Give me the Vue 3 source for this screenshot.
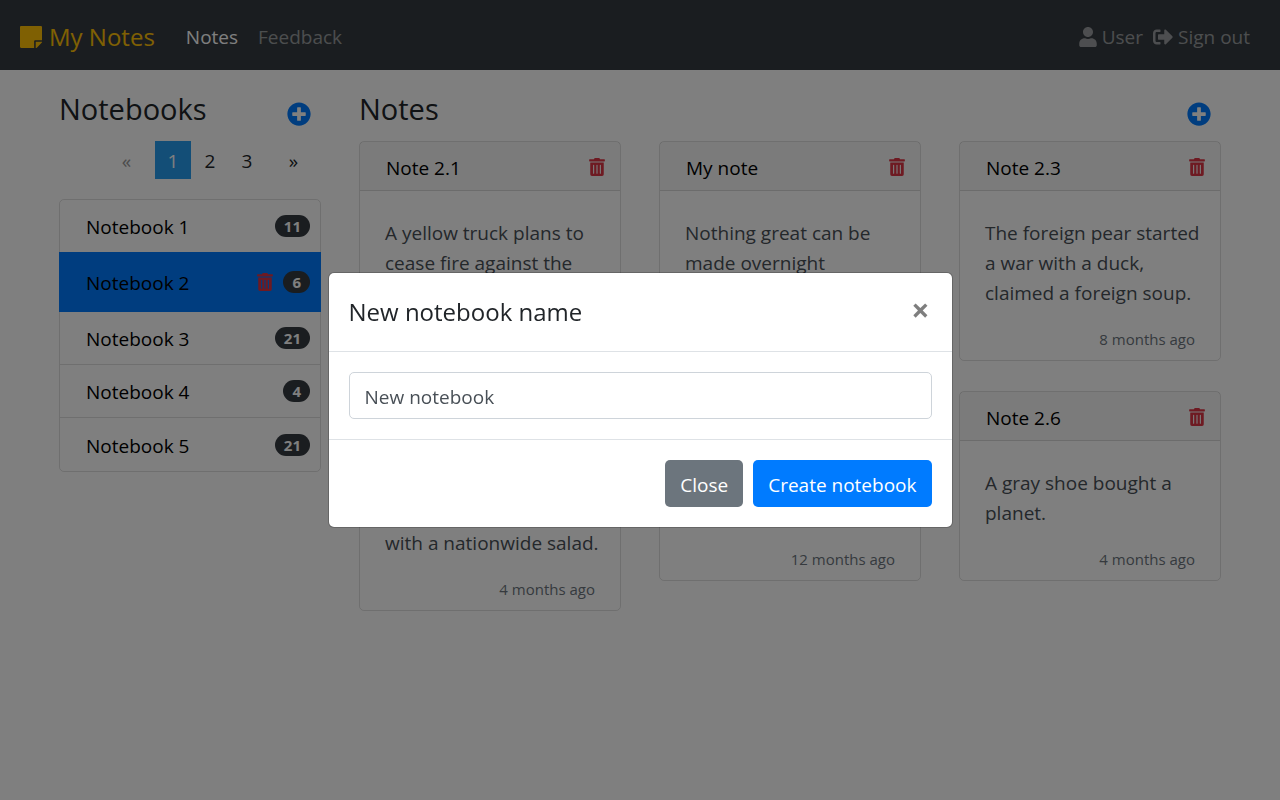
<script setup>
import { ref } from 'vue'

const name = ref('')
const notebooks = [
  { id: 1, title: 'Notebook 1', count: 11 },
  { id: 2, title: 'Notebook 2', count: 6, active: true },
  { id: 3, title: 'Notebook 3', count: 21 },
  { id: 4, title: 'Notebook 4', count: 4 },
  { id: 5, title: 'Notebook 5', count: 21 },
]
const notes = [
  { title: 'Note 2.1', lines: ['A yellow truck plans to', 'cease fire against the'], age: '4 months ago', tall: true },
  { title: 'My note', lines: ['Nothing great can be', 'made overnight'], age: '2 months ago', tall: true },
  { title: 'Note 2.3', lines: ['The foreign pear started', 'a war with a duck,', 'claimed a foreign soup.'], age: '8 months ago' },
  { title: 'Note 2.4', lines: ['The truck went away', 'and came back', 'with a nationwide salad.'], age: '4 months ago' },
  { title: 'Note 2.5', lines: [], age: '12 months ago' },
  { title: 'Note 2.6', lines: ['A gray shoe bought a', 'planet.'], age: '4 months ago' },
]
const trash = 'M32 464a48 48 0 0 0 48 48h288a48 48 0 0 0 48-48V128H32zm272-256a16 16 0 0 1 32 0v224a16 16 0 0 1-32 0zm-96 0a16 16 0 0 1 32 0v224a16 16 0 0 1-32 0zm-96 0a16 16 0 0 1 32 0v224a16 16 0 0 1-32 0zM432 32H312l-9.4-18.700A24 24 0 0 0 281.100 0H166.800a23.700 23.700 0 0 0-21.400 13.300L136 32H16A16 16 0 0 0 0 48v32a16 16 0 0 0 16 16h416a16 16 0 0 0 16-16V48a16 16 0 0 0-16-16z'
const plus = 'M256 8C119 8 8 119 8 256s111 248 248 248 248-111 248-248S393 8 256 8zm144 276c0 6.600-5.400 12-12 12h-92v92c0 6.600-5.400 12-12 12h-56c-6.600 0-12-5.400-12-12v-92h-92c-6.600 0-12-5.400-12-12v-56c0-6.600 5.400-12 12-12h92v-92c0-6.600 5.400-12 12-12h56c6.600 0 12 5.400 12 12v92h92c6.600 0 12 5.400 12 12v56z'
</script>

<template>
  <div class="page">
    <header class="navbar">
      <a class="brand" href="#">
        <svg class="icon-note" viewBox="0 32 448 448"><path d="M312 320h136V56c0-13.300-10.700-24-24-24H24C10.700 32 0 42.700 0 56v400c0 13.300 10.700 24 24 24h264V344c0-13.200 10.800-24 24-24zm129 55l-98 98c-4.500 4.500-10.600 7-17 7h-6V352h128v6.100c0 6.300-2.500 12.400-7 16.900z" /></svg>
        My Notes
      </a>
      <nav class="links">
        <a class="current" href="#">Notes</a>
        <a href="#">Feedback</a>
      </nav>
      <div class="account">
        <a href="#">
          <svg class="icon-user" viewBox="0 0 448 512"><path d="M224 256c70.700 0 128-57.300 128-128S294.700 0 224 0 96 57.300 96 128s57.300 128 128 128zm89.600 32h-16.700c-22.200 10.200-46.900 16-72.900 16s-50.600-5.800-72.900-16h-16.700C60.200 288 0 348.200 0 422.400V464c0 26.500 21.500 48 48 48h352c26.500 0 48-21.500 48-48v-41.600c0-74.200-60.200-134.400-134.400-134.400z" /></svg>
          User
        </a>
        <a href="#">
          <svg class="icon-out" viewBox="0 0 512 512"><path d="M497 273L329 441c-15 15-41 4.500-41-17v-96H152c-13.300 0-24-10.700-24-24v-96c0-13.300 10.700-24 24-24h136V88c0-21.400 25.900-32 41-17l168 168c9.300 9.400 9.300 24.600 0 34zM192 436v-40c0-6.600-5.400-12-12-12H96c-17.700 0-32-14.300-32-32V160c0-17.700 14.300-32 32-32h84c6.600 0 12-5.400 12-12V76c0-6.600-5.400-12-12-12H96c-53 0-96 43-96 96v192c0 53 43 96 96 96h84c6.600 0 12-5.400 12-12z" /></svg>
          Sign out
        </a>
      </div>
    </header>

    <main class="content">
      <section class="notebooks">
        <div class="heading">
          <h1>Notebooks</h1>
          <button class="add" type="button" aria-label="Add notebook"><svg viewBox="0 0 512 512"><path :d="plus" /></svg></button>
        </div>
        <nav class="pager" aria-label="Pages">
          <button class="step off" type="button" disabled>«</button>
          <button class="on" type="button">1</button>
          <button type="button">2</button>
          <button type="button">3</button>
          <button class="step" type="button">»</button>
        </nav>
        <ul class="list">
          <li v-for="n in notebooks" :key="n.id" :class="{ active: n.active }">
            <a href="#">{{ n.title }}</a>
            <button v-if="n.active" class="trash" type="button" aria-label="Delete notebook"><svg viewBox="0 0 448 512"><path :d="trash" /></svg></button>
            <span class="badge">{{ n.count }}</span>
          </li>
        </ul>
      </section>

      <section class="notes">
        <div class="heading">
          <h1>Notes</h1>
          <button class="add" type="button" aria-label="Add note"><svg viewBox="0 0 512 512"><path :d="plus" /></svg></button>
        </div>
        <div class="cards">
          <article v-for="n in notes" :key="n.title" class="card">
            <div class="card-head">
              <a href="#">{{ n.title }}</a>
              <button class="trash" type="button" aria-label="Delete note"><svg viewBox="0 0 448 512"><path :d="trash" /></svg></button>
            </div>
            <div class="card-body" :class="{ tall: n.tall }">
              <p><template v-for="(line, i) in n.lines" :key="i"><br v-if="i" />{{ line }}</template></p>
              <small>{{ n.age }}</small>
            </div>
          </article>
        </div>
      </section>
    </main>

    <div class="backdrop">
      <form class="modal" role="dialog" aria-labelledby="modal-title" @submit.prevent>
        <div class="modal-head">
          <h2 id="modal-title">New notebook name</h2>
          <button class="close" type="button" aria-label="Close dialog">×</button>
        </div>
        <div class="modal-body">
          <input v-model="name" type="text" placeholder="New notebook" aria-label="New notebook name" />
        </div>
        <div class="modal-foot">
          <button class="btn secondary" type="button">Close</button>
          <button class="btn primary" type="submit">Create notebook</button>
        </div>
      </form>
    </div>
  </div>
</template>

<style>
body {
  background: #fff;
}
</style>

<style scoped>
.page {
  min-height: 100vh;
  font-family: "Segoe UI", "Open Sans", "Noto Sans", sans-serif;
  font-size: 19px;
  line-height: 30px;
  color: #212529;
}
.page *,
.page {
  box-sizing: border-box;
}
h1, h2, p, ul {
  margin: 0;
  padding: 0;
  font-weight: 400;
}
a {
  color: inherit;
  text-decoration: none;
}
button {
  font: inherit;
  color: inherit;
  margin: 0;
  padding: 0;
  border: 0;
  background: none;
  cursor: pointer;
}
svg {
  display: block;
  fill: currentColor;
  flex: none;
}
.navbar {
  display: flex;
  align-items: center;
  height: 70px;
  padding: 3px 30px 0 20px;
  background: #343a40;
  color: rgba(255, 255, 255, 0.5);
}
.brand {
  display: flex;
  align-items: center;
  gap: 7px;
  font-size: 24px;
  color: #ffc107;
}
.icon-note {
  width: 22px;
  height: 22px;
}
.links {
  display: flex;
  gap: 20px;
  margin-left: 31px;
}
.links .current {
  color: #fff;
}
.account {
  display: flex;
  gap: 10px;
  margin-left: auto;
}
.account a {
  display: flex;
  align-items: center;
  gap: 5px;
}
.icon-user {
  width: 18px;
  height: 20px;
}
.icon-out {
  width: 20px;
  height: 20px;
}
.content {
  display: grid;
  grid-template-columns: 1fr 3fr;
  max-width: 1200px;
  margin: 0 auto;
  padding-top: 20px;
}
.notebooks,
.notes {
  padding: 0 19px;
}
.heading {
  display: flex;
  align-items: flex-start;
  justify-content: space-between;
  height: 41px;
  margin-bottom: 10px;
  padding-right: 10px;
}
.heading h1 {
  font-size: 29px;
  line-height: 38px;
}
.add {
  margin-top: 12px;
  color: #007bff;
}
.add svg {
  width: 24px;
  height: 24px;
}
.pager {
  display: flex;
  justify-content: flex-end;
  gap: 1px;
  margin-bottom: 20px;
}
.pager button {
  width: 36px;
  height: 38px;
  padding-top: 2px;
}
.pager .step {
  width: 55px;
}
.pager .on {
  background: #269cee;
  color: #fff;
}
.pager .off {
  color: #999;
}
.list {
  list-style: none;
  border: 1px solid rgba(0, 0, 0, 0.125);
  border-radius: 5px;
}
.list li {
  display: flex;
  align-items: center;
  gap: 10px;
  height: 53px;
  padding: 0 10px 0 26px;
  border-bottom: 1px solid rgba(0, 0, 0, 0.125);
  color: #000;
}
.list li:first-child {
  height: 52px;
  border-bottom: 0;
}
.list li:last-child {
  border-bottom: 0;
}
.list .active {
  height: 60px;
  margin: 0 -1px;
  padding: 0 11px 0 27px;
  border: 0;
  background: #007bff;
}
.list a {
  flex: 1;
  padding-top: 2px;
}
.trash {
  color: #dc3545;
}
.trash svg {
  width: 16px;
  height: 18px;
}
.badge {
  padding: 0 9px;
  border-radius: 11px;
  background: #343a40;
  color: #fff;
  font-size: 15px;
  font-weight: 700;
  line-height: 22px;
}
.cards {
  display: grid;
  grid-template-columns: repeat(3, minmax(0, 1fr));
  gap: 30px 38px;
  align-items: start;
}
.card {
  border: 1px solid rgba(0, 0, 0, 0.125);
  border-radius: 5px;
}
.card-head {
  display: flex;
  align-items: center;
  justify-content: space-between;
  height: 49px;
  padding: 2px 15px 0 26px;
  border-bottom: 1px solid rgba(0, 0, 0, 0.125);
  background: rgba(0, 0, 0, 0.03);
  color: #000;
}
.card-head a {
  padding-top: 2px;
}
.card-body {
  padding: 27px 25px 6px;
  color: #495057;
  white-space: nowrap;
}
.card-body p {
  min-height: 60px;
}
.card-body.tall p {
  min-height: 90px;
}
.card-body small {
  display: block;
  margin-top: 16px;
  font-size: 15px;
  text-align: right;
  color: #6c757d;
}
.backdrop {
  position: fixed;
  inset: 0;
  display: flex;
  align-items: center;
  justify-content: center;
  background: rgba(0, 0, 0, 0.5);
}
.modal {
  width: 100%;
  max-width: 625px;
  border: 1px solid rgba(0, 0, 0, 0.2);
  border-radius: 6px;
  background: #fff;
  background-clip: padding-box;
}
.modal-head {
  display: flex;
  justify-content: space-between;
  padding: 20px;
  border-bottom: 1px solid #dee2e6;
}
.modal-head h2 {
  font-size: 24px;
  line-height: 38px;
}
.close {
  width: 22px;
  font-size: 32px;
  font-weight: 700;
  line-height: 34px;
  align-self: flex-start;
  color: #000;
  opacity: 0.5;
}
.modal-body {
  padding: 20px;
}
.modal-body input {
  display: block;
  width: 100%;
  height: 47px;
  padding: 2px 15px 0;
  border: 1px solid #ced4da;
  border-radius: 5px;
  font: inherit;
  color: #495057;
}
.modal-body input::placeholder {
  color: #495057;
  opacity: 1;
}
.modal-foot {
  display: flex;
  justify-content: flex-end;
  gap: 10px;
  padding: 20px;
  border-top: 1px solid #dee2e6;
}
.btn {
  height: 47px;
  padding: 2px 15px 0;
  border-radius: 5px;
  color: #fff;
}
.secondary {
  background: #6c757d;
}
.primary {
  background: #007bff;
}
</style>
